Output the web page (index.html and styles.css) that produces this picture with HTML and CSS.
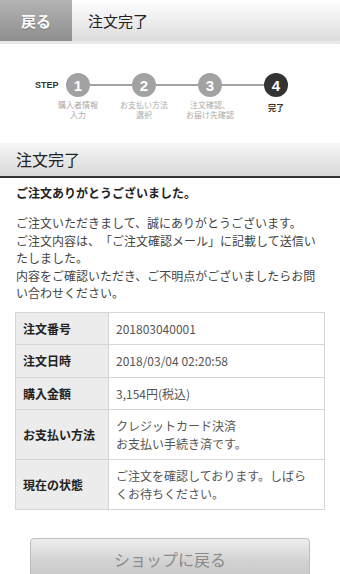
FILE: index.html
```html
<!DOCTYPE html>
<html lang="ja">
<head>
    <meta charset="UTF-8">
    <meta name="viewport" content="width=device-width, initial-scale=1.0">
    <title>注文完了</title>
    <link rel="stylesheet" href="styles.css">
</head>
<body>

<header class="header">
    <a class="back-btn" href="#">戻る</a>
    <h1 class="header-title">注文完了</h1>
</header>

<div class="steps">
    <div class="step-row">
        <span class="step-label">STEP</span>
        <span class="step-circle">1</span>
        <span class="step-line"></span>
        <span class="step-circle">2</span>
        <span class="step-line"></span>
        <span class="step-circle">3</span>
        <span class="step-line"></span>
        <span class="step-circle current">4</span>
    </div>
    <div class="step-names">
        <span>購入者情報<br>入力</span>
        <span>お支払い方法<br>選択</span>
        <span>注文確認、<br>お届け先確認</span>
        <span class="current">完了</span>
    </div>
</div>

<h2 class="section-title">注文完了</h2>

<div class="content">
    <p class="thanks">ご注文ありがとうございました。</p>
    <p class="message">ご注文いただきまして、誠にありがとうございます。<br>ご注文内容は、「ご注文確認メール」に記載して送信いたしました。<br>内容をご確認いただき、ご不明点がございましたらお問い合わせください。</p>

    <table class="order-table">
        <tr>
            <th>注文番号</th>
            <td>201803040001</td>
        </tr>
        <tr>
            <th>注文日時</th>
            <td>2018/03/04 02:20:58</td>
        </tr>
        <tr>
            <th>購入金額</th>
            <td>3,154円(税込)</td>
        </tr>
        <tr>
            <th>お支払い方法</th>
            <td>クレジットカード決済<br>お支払い手続き済です。</td>
        </tr>
        <tr>
            <th>現在の状態</th>
            <td>ご注文を確認しております。しばらくお待ちください。</td>
        </tr>
    </table>

    <div class="btn-area">
        <a class="shop-btn" href="#">ショップに戻る</a>
    </div>
</div>

</body>
</html>
```

FILE: styles.css
```css
body {
    margin: 0;
    font-family: "Noto Sans CJK JP", "Noto Sans", sans-serif;
    color: #333;
    background-color: #fff;
    text-spacing-trim: space-all;
}

.header {
    display: flex;
    align-items: center;
    height: 41px;
    background: linear-gradient(#fefefe, #dcdcdc);
    border-bottom: 3px solid #e8e8e8;
}

.back-btn {
    display: flex;
    align-items: center;
    justify-content: center;
    width: 72px;
    height: 100%;
    background: linear-gradient(#b4b4b4, #8e8e8e);
    color: #fff;
    font-size: 15px;
    font-weight: bold;
    text-decoration: none;
    text-shadow: 0 1px 1px rgba(0, 0, 0, 0.25);
}

.header-title {
    margin: 0 0 0 16px;
    font-size: 15px;
    font-weight: normal;
    color: #222;
}

.steps {
    padding-top: 29px;
}

.step-row {
    display: flex;
    align-items: center;
    padding-left: 35px;
}

.step-label {
    width: 25px;
    margin-right: 6px;
    font-family: "Liberation Sans", Arial, sans-serif;
    font-size: 9px;
    font-weight: bold;
    color: #333;
}

.step-circle {
    display: flex;
    align-items: center;
    justify-content: center;
    width: 24px;
    height: 24px;
    border-radius: 50%;
    background-color: #a2a2a2;
    color: #fff;
    font-family: "Liberation Sans", Arial, sans-serif;
    font-size: 15px;
    font-weight: bold;
}

.step-circle.current {
    background-color: #333;
}

.step-line {
    width: 42px;
    height: 2px;
    background-color: #a2a2a2;
}

.step-names {
    display: grid;
    grid-template-columns: repeat(4, 66px);
    padding-left: 45px;
    margin-top: 3px;
}

.step-names span {
    font-size: 8px;
    line-height: 10px;
    text-align: center;
    color: #aaa;
}

.step-names span.current {
    color: #333;
    font-weight: bold;
    padding-top: 3px;
}

.section-title {
    margin: 23px 0 0;
    height: 33px;
    line-height: 33px;
    padding-left: 16px;
    font-size: 16px;
    font-weight: normal;
    color: #222;
    background: linear-gradient(#f6f6f6, #d9d9d9);
    border-bottom: 2px solid #333;
}

.content {
    padding: 0 15px;
}

.thanks {
    margin: 6px 1px 0;
    font-size: 12px;
    font-weight: bold;
    line-height: 17px;
    color: #222;
}

.message {
    margin: 13px 1px 0;
    font-size: 12px;
    line-height: 17.5px;
    color: #444;
}

.order-table {
    width: 100%;
    margin-top: 10px;
    border-collapse: collapse;
    font-size: 12px;
    line-height: 17.5px;
}

.order-table th,
.order-table td {
    border: 1px solid #d6d6d6;
    padding: 7px;
    text-align: left;
    vertical-align: middle;
}

.order-table th {
    width: 78px;
    background-color: #ececec;
    color: #222;
    font-weight: bold;
}

.order-table td {
    color: #555;
}

.btn-area {
    padding: 28px 15px 0;
}

.shop-btn {
    display: block;
    height: 44px;
    line-height: 40px;
    text-align: center;
    font-size: 16px;
    color: #8a8a8a;
    text-decoration: none;
    background: linear-gradient(#eeeeee, #d2d2d2 50%, #c6c6c6);
    border: 1px solid #bdbdbd;
    border-radius: 4px;
}
```
